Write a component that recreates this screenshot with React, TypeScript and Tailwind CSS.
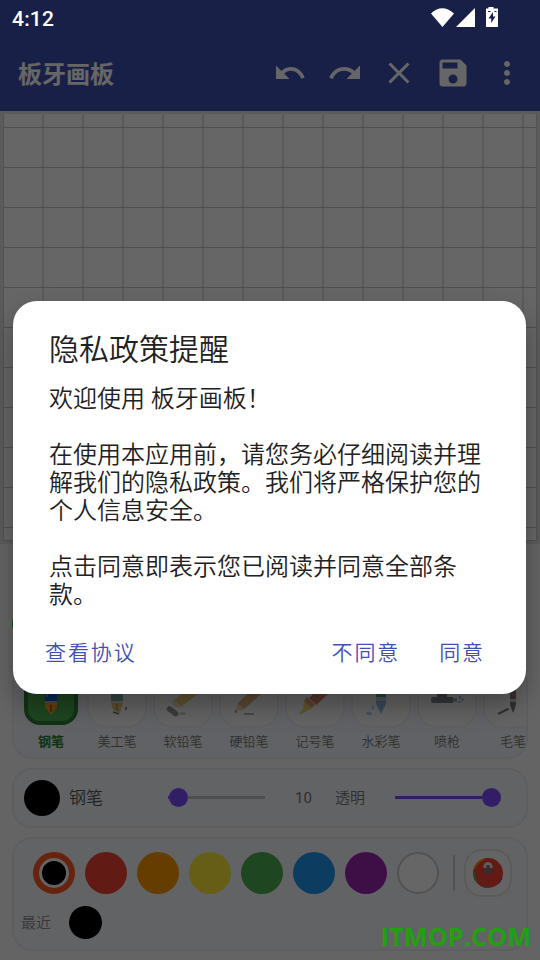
import type { ReactNode } from 'react'

interface Tool {
  id: string
  name: string
  icon: ReactNode
}

// Only the lower half of each tool icon stays visible under the dialog
const tools: Tool[] = [
  {
    id: 'pen',
    name: '钢笔',
    icon: (
      <>
        <rect x="24" y="8" width="12" height="27" fill="#1a66d9" />
        <rect x="25" y="24" width="2" height="5" fill="#5b9bf0" />
        <rect x="24" y="33" width="12" height="2" fill="#b5b5c5" />
        <path d="M24 35h12v4l-6 8-6-8z" fill="#f5a716" />
        <path d="M29 37h2v7h-2z" fill="#c9540f" />
      </>
    ),
  },
  {
    id: 'art',
    name: '美工笔',
    icon: (
      <>
        <rect x="24" y="8" width="12" height="25" fill="#6fa59b" />
        <path d="M24 33h12v2h-12z" fill="#d8d8d8" />
        <path d="M24 35h12l-3 10-7-3z" fill="#e5bd62" />
        <path d="M29 36h2v7h-2z" fill="#b88a3e" />
        <path d="M26 44l6 2" stroke="#555555" strokeWidth="1.5" />
        <ellipse cx="39" cy="40.5" rx="1" ry="2" fill="#777b98" />
      </>
    ),
  },
  {
    id: 'soft',
    name: '软铅笔',
    icon: (
      <>
        <path d="M45 13l7 7-24 19-7-7z" fill="#eac55f" />
        <path d="M21 31l7 8-4 1-6-5z" fill="#e8d9ac" />
        <path d="M16.500 41l6 4.500" stroke="#8a8583" strokeWidth="5.500" strokeLinecap="round" />
        <ellipse cx="29.5" cy="45.5" rx="3.5" ry="1.5" fill="#c5c5c5" />
      </>
    ),
  },
  {
    id: 'hard',
    name: '硬铅笔',
    icon: (
      <>
        <path d="M43 12l7 7-26 23-6-6z" fill="#e0a76c" />
        <path d="M18.500 35l6 6-8 3z" fill="#efd3b0" />
        <path d="M16 42v2.500h2.500z" fill="#555555" />
        <path d="M25 46h10" stroke="#888888" strokeWidth="1.500" />
      </>
    ),
  },
  {
    id: 'marker',
    name: '记号笔',
    icon: (
      <>
        <path d="M44 10l8 8-21 19-7-7z" fill="#d8705a" />
        <path d="M22 29l8 8-4 3-7-7z" fill="#e3925f" />
        <path d="M19 33l8 7-5 3-6 3-2-1 4-4z" fill="#ebcf5e" />
      </>
    ),
  },
  {
    id: 'water',
    name: '水彩笔',
    icon: (
      <>
        <rect x="25" y="8" width="10" height="21" fill="#35a093" />
        <path d="M25 29h10v4h-10z" fill="#bccbd6" />
        <path d="M25 33h10c0 5-3 8-5 13-2-5-5-8-5-13z" fill="#77aee6" />
        <ellipse cx="18" cy="45.500" rx="3" ry="1.700" fill="#a5c9e6" />
        <ellipse cx="22" cy="39.500" rx="1.200" ry="2.200" fill="#99c9ee" />
      </>
    ),
  },
  {
    id: 'spray',
    name: '喷枪',
    icon: (
      <>
        <path d="M20 24h10v6h-10z" fill="#68757d" />
        <rect x="14" y="29" width="23" height="6" rx="2" fill="#6f7980" />
        <path d="M36 30h4v4h-4z" fill="#a0abb2" />
        <path d="M43 28v2.500M45.500 30v3M42.500 33v2" stroke="#79b0e0" strokeWidth="2" />
      </>
    ),
  },
  {
    id: 'brush',
    name: '毛笔',
    icon: (
      <>
        <rect x="27" y="6" width="6" height="26" fill="#8b6258" />
        <path d="M27 31h6v3h-6z" fill="#c4c4c4" />
        <path d="M27 34h6c0 5-2 8-3 11-1-3-3-6-3-11z" fill="#626262" />
        <path d="M16 45.500l9-4.500" stroke="#656565" strokeWidth="2" strokeLinecap="round" />
      </>
    ),
  },
]

const swatches = [
  { id: 'red', cls: 'bg-[#f44336]' },
  { id: 'orange', cls: 'bg-[#ff9800]' },
  { id: 'yellow', cls: 'bg-[#ffeb3b]' },
  { id: 'green', cls: 'bg-[#4caf50]' },
  { id: 'blue', cls: 'bg-[#2196f3]' },
  { id: 'purple', cls: 'bg-[#9c27b0]' },
  { id: 'white', cls: 'bg-white border-2 border-[#cccccc]' },
]

function StatusBar() {
  return (
    <div className="absolute inset-x-0 top-0 z-30 flex h-9 items-center justify-between pl-3 pr-[42px] text-white">
      <span className="pt-0.5 font-['Roboto'] text-[21px] font-medium leading-none tracking-[0.2px]">4:12</span>
      <svg width="68" height="24" viewBox="0 0 68 24" fill="currentColor">
        <path d="M1 7.500Q12 -3 24 7.500L12.500 21Z" />
        <path d="M45 2v19H26z" />
        <path d="M58.500 1h5v1.500H68v18.500H56V2.500h2.500z" />
        <path d="M63 6l-4.500 6.500h2.700v4.500l4.300-6.500h-2.500z" fill="#192048" />
        <path d="M58 5.500h2.500M64.500 5.500h2" stroke="#192048" strokeWidth="1" />
      </svg>
    </div>
  )
}

function AppBar() {
  return (
    <header className="flex h-[111px] items-center justify-between bg-[#3f51b5] pl-[18px] pr-[15px] pt-[36px] text-white">
      <h1 className="pt-0.5 text-2xl font-bold">板牙画板</h1>
      <div className="flex items-center gap-[18px] pb-0.5">
        <svg width="36" height="36" viewBox="0 0 24 24" fill="currentColor">
          <path d="M2 7v9h9l-3.600-3.600c1.300-1.100 2.700-1.900 4.400-1.900 3.200 0 5.900 2.300 7 5.300l2.300-.700C19.700 10.800 16.200 8 12 8c-2.500 0-4.700 1-6.400 2.600z" />
        </svg>
        <svg width="36" height="36" viewBox="0 0 24 24" fill="currentColor">
          <path d="M18.400 10.600C16.550 8.990 14.150 8 11.500 8c-4.650 0-8.580 3.030-9.960 7.220L3.900 16c1.050-3.190 4.050-5.500 7.600-5.500 1.950 0 3.730.720 5.120 1.880L13 16h9V7l-3.600 3.600z" />
        </svg>
        <svg width="36" height="36" viewBox="0 0 24 24" fill="currentColor">
          <path d="M19 6.410L17.590 5 12 10.590 6.410 5 5 6.410 10.590 12 5 17.590 6.410 19 12 13.410 17.590 19 19 17.590 13.410 12z" />
        </svg>
        <svg width="36" height="36" viewBox="0 0 24 24" fill="currentColor">
          <path d="M17 3H5c-1.110 0-2 .9-2 2v14c0 1.100.890 2 2 2h14c1.100 0 2-.9 2-2V7l-4-4zm-5 16c-1.660 0-3-1.340-3-3s1.340-3 3-3 3 1.340 3 3-1.340 3-3 3zm3-10H5V5h10v4z" />
        </svg>
        <svg width="36" height="36" viewBox="0 0 24 24" fill="currentColor">
          <path d="M12 8c1.100 0 2-.9 2-2s-.9-2-2-2-2 .9-2 2 .9 2 2 2zm0 2c-1.100 0-2 .9-2 2s.9 2 2 2 2-.9 2-2-.9-2-2-2zm0 6c-1.100 0-2 .9-2 2s.9 2 2 2 2-.9 2-2-.9-2-2-2z" />
        </svg>
      </div>
    </header>
  )
}

function Canvas() {
  return (
    <div className="h-[433px] bg-[#e4e4e4] px-[3px] pb-[3px] pt-[3px]">
      <svg className="block border-x border-b border-[#cccccc] bg-white" width="534" height="427">
        <defs>
          <pattern id="grid" x="38" y="13" width="40" height="40" patternUnits="userSpaceOnUse">
            <rect width="2" height="40" fill="#e0e0e0" />
            <rect width="40" height="1" fill="#c6c6c6" />
          </pattern>
        </defs>
        <rect width="534" height="427" fill="url(#grid)" />
      </svg>
    </div>
  )
}

function ToolRow() {
  return (
    <section className="h-[95px] overflow-hidden rounded-[20px] border-2 border-[#e9ebf0] bg-[#f3f6fc] pl-[7px]">
      <div className="flex w-[540px] gap-1.5 pt-0.5">
        {tools.map((tool, i) => (
          <div key={tool.id} className="flex w-[60px] shrink-0 flex-col items-center">
            <div className="flex h-[60px] w-[60px] items-center justify-center">
              <div
                className={
                  i === 0
                    ? 'flex h-[54px] w-[54px] items-center justify-center rounded-2xl border-[3px] border-[#2e7d32] bg-[#4caf50] ring-1 ring-inset ring-[#2e7d32]'
                    : 'flex h-[60px] w-[60px] items-center justify-center rounded-[20px] border-2 border-[#ededed] bg-[#fafafa]'
                }
              >
                <svg
                  className={i === 0 ? 'shrink-0' : 'shrink-0 opacity-85'}
                  width="60"
                  height="60"
                  viewBox="0 0 60 60"
                  fill="none"
                >
                  {tool.icon}
                </svg>
              </div>
            </div>
            <span
              className={
                i === 0
                  ? 'mt-[5px] text-[13px] font-bold leading-[18px] text-[#2e7d32]'
                  : 'mt-[5px] text-[13px] font-[350] leading-[18px] text-[#757575]'
              }
            >
              {tool.name}
            </span>
          </div>
        ))}
      </div>
    </section>
  )
}

function BrushSettings() {
  return (
    <section className="mt-[9px] flex h-[60px] items-center rounded-[20px] border-2 border-[#e9ebf0] bg-[#f4f7fc] pl-2.5">
      <div className="h-9 w-9 rounded-full bg-black" />
      <span className="ml-[9px] w-[99px] pt-px text-[17px] font-[350] text-[#555555]">钢笔</span>
      <div className="flex h-5 w-[97px] items-center pb-px">
        <div className="h-[3px] w-[1px] bg-[#7c4dff]" />
        <div className="h-[19px] w-[19px] rounded-full bg-[#7c4dff]" />
        <div className="h-[3px] flex-1 bg-[#c4c4c4]" />
      </div>
      <span className="ml-[30px] w-[40px] font-['Roboto'] text-[15px] text-[#757575]">10</span>
      <span className="w-[60px] text-[15px] font-[350] text-[#757575]">透明</span>
      <div className="flex h-5 w-[106px] items-center pb-px">
        <div className="h-[3px] flex-1 bg-[#7c4dff]" />
        <div className="h-[19px] w-[19px] rounded-full bg-[#7c4dff]" />
      </div>
    </section>
  )
}

function Palette() {
  return (
    <section className="mt-[9px] h-[114px] rounded-[20px] border-2 border-[#e9ebf0] bg-[#f4f7fc] pt-2.5">
      <div className="flex h-12 items-center pl-[19px]">
        <div className="flex h-[42px] w-[42px] items-center justify-center rounded-full border-[6px] border-[#ff5722] bg-[#f4f7fc]">
          <div className="h-6 w-6 rounded-full bg-black" />
        </div>
        {swatches.map(s => (
          <div key={s.id} className={`ml-2.5 h-[42px] w-[42px] rounded-full ${s.cls}`} />
        ))}
        <div className="ml-3.5 h-9 w-[2px] bg-[#cccccc]" />
        <div className="ml-[9px] flex h-12 w-12 items-center justify-center rounded-[18px] border-2 border-[#e4e4e4] bg-[#fafafa]">
          <svg width="30" height="30" viewBox="0 0 30 30">
            <circle cx="15" cy="15" r="15" fill="#f44336" />
            <path d="M1.500 11A14.200 14.200 0 0 1 11 1.500" fill="none" stroke="#ff9800" strokeWidth="1.500" />
            <path d="M0.900 14A14.200 14.200 0 0 0 4.500 24" fill="none" stroke="#4caf50" strokeWidth="1.500" />
            <path d="M8 28A15 15 0 0 0 14 29.500" fill="none" stroke="#2196f3" strokeWidth="1" />
            <path d="M25 26A15 15 0 0 0 29 20" fill="none" stroke="#9c27b0" strokeWidth="1" />
            <path d="M12 10V8.500a3 3 0 0 1 6 0V10" fill="none" stroke="#e8e8e8" strokeWidth="3" />
            <path d="M13.500 7.500h3V11H20v3h-3.500v3h-3v-3H10v-3h3.500z" fill="#777777" />
          </svg>
        </div>
      </div>
      <div className="mt-[9px] flex items-center pl-[7px]">
        <span className="w-12 pt-px text-[15px] font-[350] text-[#8a8a8a]">最近</span>
        <div className="h-[33px] w-[33px] rounded-full bg-black" />
      </div>
    </section>
  )
}

function PrivacyDialog() {
  return (
    <div
      role="dialog"
      className="mt-[301px] flex h-[393px] w-[513px] flex-col rounded-[24px] bg-white px-9 pt-[27px] font-[350] shadow-[0_12px_24px_rgba(0,0,0,0.3)]"
    >
      <h2 className="text-[30px] font-[350] leading-[44px] text-[#212121]">隐私政策提醒</h2>
      <p className="mt-[13px] whitespace-pre-line text-2xl leading-7 text-[#212121]">
        {'欢迎使用 板牙画板！\n\n在使用本应用前，请您务必仔细阅读并理解我们的隐私政策。我们将严格保护您的个人信息安全。\n\n点击同意即表示您已阅读并同意全部条款。'}
      </p>
      <div className="-ml-1 mt-[28px] flex text-[21px] leading-[32px] tracking-[1.9px] text-[#3f51b5]">
        <button>查看协议</button>
        <button className="ml-auto">不同意</button>
        <button className="ml-[39px] mr-[5px]">同意</button>
      </div>
    </div>
  )
}

export default function App() {
  return (
    <div className="relative h-[960px] w-[540px] overflow-hidden bg-[#fafafa] font-['Roboto','Noto_Sans_CJK_SC',sans-serif]">
      <AppBar />
      <Canvas />
      <div className="px-3 pt-[60px]">
        <div className="mb-[20px] h-10 w-10 rounded-full bg-[#4caf50]" />
        <ToolRow />
        <BrushSettings />
        <Palette />
      </div>
      <div className="absolute inset-0 z-10 flex items-start bg-black/60 pl-[13px]">
        <PrivacyDialog />
      </div>
      <StatusBar />
      <div className="absolute bottom-[9px] right-[9px] z-20 font-['Open_Sans'] text-[25.3px] font-bold leading-[30px] text-[#22a010]">
        ITMOP.COM
      </div>
    </div>
  )
}
